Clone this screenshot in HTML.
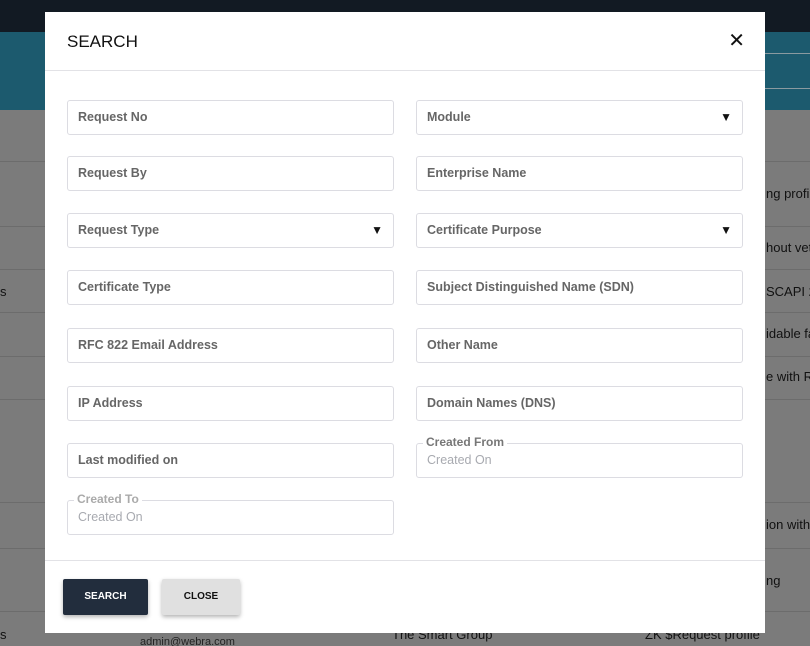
<!DOCTYPE html>
<html><head><style>
html,body{margin:0;width:810px;height:646px;overflow:hidden;background:#7b7b7b}
body{font-family:"Liberation Sans",sans-serif;position:relative}
.full{position:absolute;left:0;top:0;width:810px;height:646px;background:#7b7b7b}
.nav{position:absolute;left:0;top:0;width:810px;height:32px;background:#121a23}
.band{position:absolute;left:0;top:32px;width:810px;height:78px;background:#1c5a6e}
.bl{position:absolute;left:765px;width:45px;height:1px;background:#8a9aa0}
.bg{position:absolute;font-size:13px;color:#111;white-space:nowrap}
.hl{position:absolute;left:0;width:810px;height:1px;background:#6c6c6c}
.modal{position:absolute;left:45px;top:12px;width:720px;height:621px;background:#fff}
.title{position:absolute;left:22px;top:20px;font-size:17px;color:#111}
.x{position:absolute;right:20px;top:16px;font-size:20px;color:#111}
.line{position:absolute;left:0;width:720px;height:1px;background:#e2e2e6}
.f{position:absolute;width:325px;height:33px;border:1px solid #dcdce2;border-radius:3px;font-size:12.5px;font-weight:bold;color:#666;line-height:33px;text-indent:10px;white-space:nowrap}
.f .a{position:absolute;right:10px;top:0;font-size:12px;color:#111}
.f .lg{position:absolute;left:6px;top:-9px;background:#fff;padding:0 3px;line-height:14px;text-indent:0;font-size:12px;color:#777}
.ph{font-weight:normal;color:#a8aab0}
.btn{position:absolute;top:567px;height:36px;font-size:10px;font-weight:bold;text-align:center;line-height:36px;border-radius:2px;box-shadow:0 2px 4px rgba(0,0,0,.3)}
</style></head><body>
<div class="full"></div>
<div class="nav"></div><div class="band"></div>
<div class="bl" style="top:53px"></div><div class="bl" style="top:88px"></div>
<div class="hl" style="top:161px"></div><div class="hl" style="top:226px"></div><div class="hl" style="top:269px"></div><div class="hl" style="top:312px"></div><div class="hl" style="top:356px"></div><div class="hl" style="top:399px"></div><div class="hl" style="top:502px"></div><div class="hl" style="top:548px"></div><div class="hl" style="top:611px"></div>
<div class="bg" style="left:766px;top:186px">ng profile</div>
<div class="bg" style="left:766px;top:240px">hout vett</div>
<div class="bg" style="left:766px;top:284px">SCAPI 2.0</div>
<div class="bg" style="left:766px;top:326px">idable fa</div>
<div class="bg" style="left:766px;top:369px">e with R</div>
<div class="bg" style="left:766px;top:517px">ion with</div>
<div class="bg" style="left:766px;top:573px">ng</div>
<div class="bg" style="left:0;top:284px">s</div>
<div class="bg" style="left:0;top:627px">s</div>
<div class="bg" style="left:392px;top:627px">The Smart Group</div>
<div class="bg" style="left:645px;top:627px">ZK $Request profile</div>
<div class="bg" style="left:140px;top:636px;font-size:11px;color:#222">admin@webra.com</div>
<div class="modal">
<div class="title">SEARCH</div><div class="x">✕</div>
<div class="line" style="top:58px"></div>
<div class="f" style="left:22px;top:88px">Request No</div>
<div class="f" style="left:371px;top:88px">Module<span class="a">▼</span></div>
<div class="f" style="left:22px;top:144px">Request By</div>
<div class="f" style="left:371px;top:144px">Enterprise Name</div>
<div class="f" style="left:22px;top:201px">Request Type<span class="a">▼</span></div>
<div class="f" style="left:371px;top:201px">Certificate Purpose<span class="a">▼</span></div>
<div class="f" style="left:22px;top:258px">Certificate Type</div>
<div class="f" style="left:371px;top:258px">Subject Distinguished Name (SDN)</div>
<div class="f" style="left:22px;top:316px">RFC 822 Email Address</div>
<div class="f" style="left:371px;top:316px">Other Name</div>
<div class="f" style="left:22px;top:374px">IP Address</div>
<div class="f" style="left:371px;top:374px">Domain Names (DNS)</div>
<div class="f" style="left:22px;top:431px">Last modified on</div>
<div class="f ph" style="left:371px;top:431px">Created On<span class="lg" style="font-weight:bold">Created From</span></div>
<div class="f ph" style="left:22px;top:488px">Created On<span class="lg" style="font-weight:bold;color:#aaa">Created To</span></div>
<div class="line" style="top:548px"></div>
<div class="btn" style="left:18px;width:85px;background:#222d3d;color:#fff">SEARCH</div>
<div class="btn" style="left:117px;width:78px;background:#e0e0e0;color:#111">CLOSE</div>
</div>
</body></html>
